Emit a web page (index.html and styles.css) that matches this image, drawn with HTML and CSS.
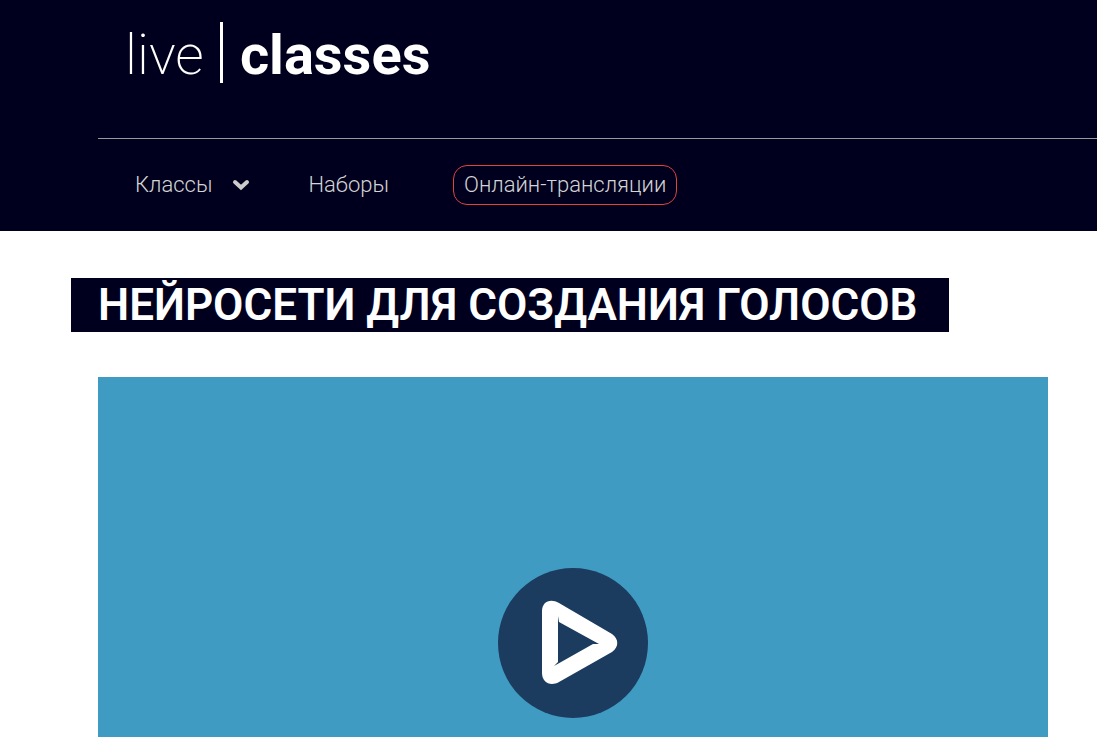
FILE: index.html
```html
<!DOCTYPE html>
<html lang="ru">
<head>
	<meta charset="utf-8">
	<meta name="viewport" content="width=device-width, initial-scale=1">
	<title>live classes</title>
	<link rel="stylesheet" href="styles.css">
</head>
<body>
	<header class="header">
		<a class="logo" href="#">
			<span class="logo-live">live</span>
			<span class="logo-classes">classes</span>
		</a>
		<nav class="menu">
			<a class="menu-link" href="#">Классы
				<svg class="menu-arrow" viewBox="0 0 18 12" aria-hidden="true">
					<path d="M3 3l6 5.500 6-5.500"/>
				</svg>
			</a>
			<a class="menu-link" href="#">Наборы</a>
			<a class="menu-link menu-live" href="#">Онлайн-трансляции</a>
		</nav>
	</header>

	<main class="content">
		<h1 class="title">Нейросети для создания голосов</h1>
		<div class="video">
			<button class="play" type="button" aria-label="Смотреть">
				<svg viewBox="0 0 150 150" aria-hidden="true">
					<path class="play-shape" d="M44 43C44 34 52 30 61 35L114 66C121 71 121 79 114 84L61 114C52 119 44 114 44 105Z"/>
					<path class="play-hole" d="M60 48L61 54 101 76 95 76 56 98 60 94Z"/>
				</svg>
			</button>
		</div>
	</main>
</body>
</html>
```
FILE: styles.css
```css
* {
	box-sizing: border-box;
}

body {
	margin: 0;
	background: #fff;
	font-family: Roboto, "Liberation Sans", sans-serif;
}

a {
	color: inherit;
	text-decoration: none;
}

/* Header */
.header {
	padding: 22px 0 26px 98px;
	background: #00001e;
	color: #fff;
}

.logo {
	display: flex;
	width: fit-content;
	margin-left: 27px;
	font-size: 56px;
	line-height: 55px;
}

.logo-live {
	padding: 6px 16px 0 0;
	border-right: 3px solid #fff;
	font-weight: 200;
}

.logo-classes {
	padding: 6px 0 0 17px;
	font-weight: 700;
}

.menu {
	display: flex;
	align-items: center;
	gap: 36px;
	margin-top: 55px;
	padding: 26px 0 0 26px;
	border-top: 1px solid #999;
	color: #d4d4d4;
	font-size: 22px;
	font-weight: 300;
	line-height: 38px;
}

.menu-link {
	display: flex;
	align-items: center;
	padding: 0 10px;
	border: 1px solid transparent;
	border-radius: 14px;
}

.menu-live {
	margin-left: 17px;
	border-color: #e0433f;
}

.menu-arrow {
	width: 18px;
	height: 12px;
	margin-left: 20px;
	fill: none;
	stroke: #ccc;
	stroke-width: 4;
	stroke-linecap: round;
}

/* Page */
.content {
	padding: 47px 49px 40px 98px;
}

.title {
	width: fit-content;
	margin: 0 0 45px -27px;
	padding: 0 31px 0 27px;
	background: #00001e;
	color: #fff;
	font-size: 44px;
	font-weight: 600;
	line-height: 54px;
	text-transform: uppercase;
}

.video {
	display: flex;
	align-items: center;
	justify-content: center;
	aspect-ratio: 25 / 14;
	background: #409bc3;
}

.play {
	width: 150px;
	height: 150px;
	padding: 0;
	border: 0;
	border-radius: 50%;
	background: #1b3b5f;
	cursor: pointer;
}

.play svg {
	display: block;
}

.play-shape {
	fill: #fff;
}

.play-hole {
	fill: #1b3b5f;
}
```
